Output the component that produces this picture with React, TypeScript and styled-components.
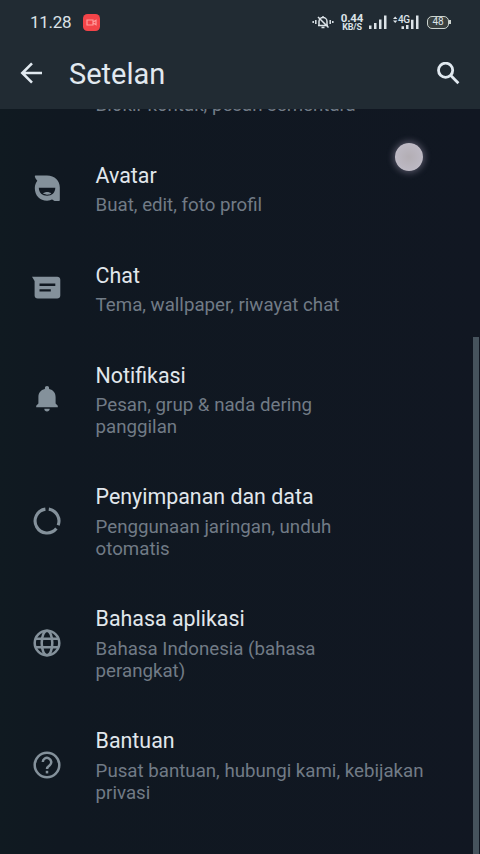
import React from 'react';
import styled, { createGlobalStyle } from 'styled-components';

const Global = createGlobalStyle`
  * { box-sizing: border-box; }
  body { margin: 0; background: #101821; font-family: Roboto, "Noto Sans", sans-serif; }
  svg { display: block; flex: none; }
`;
const Screen = styled.main`
  position: relative; width: 480px; height: 854px; overflow: hidden;
  display: flex; flex-direction: column; background: linear-gradient(90deg, #101a21 0, #101821 60px, #111722 100%);
`;
const Header = styled.header`flex: none; height: 109px; background: #212b33; color: #e1e9f0;`;
const StatusBar = styled.div`height: 44px; padding: 0 29px 0 30px; display: flex; align-items: center;`;
const Clock = styled.span`width: 53px; font-size: 17px; line-height: 20px; letter-spacing: -.3px; white-space: nowrap; color: #dbe2e7;`;
const StatusIcons = styled.div`margin-left: auto; display: flex; align-items: center; color: #dce3e8;`;
const Speed = styled.div`
  width: 22px; margin: 0 6px 0 7px; display: flex; flex-direction: column; align-items: center;
  font-size: 11.5px; line-height: 10px; font-weight: 700; letter-spacing: -.1px;
`;
const SpeedUnit = styled.span`font-size: 9px; line-height: 9px; letter-spacing: -.2px;`;
const Network = styled.div`position: relative; margin-left: 6px;`;
const NetworkLabel = styled.span`position: absolute; left: 5px; top: 0; font-size: 10px; line-height: 10px; font-weight: 500; letter-spacing: -.5px;`;
const Battery = styled.div`
  position: relative; width: 22px; height: 13px; margin: 0 2px 0 8px; border: 1.5px solid #cbd3cf; border-radius: 5px;
  display: flex; align-items: center; justify-content: center; font-size: 10px; line-height: 10px; background: #39403f;
  &::after { content: ''; position: absolute; right: -3px; top: 3px; width: 2px; height: 4px; background: #cbd3cf; }
`;
const AppBar = styled.div`height: 65px; padding: 0 19px 5px 19px; display: flex; align-items: center;`;
const Heading = styled.h1`margin: 0 auto 0 25px; font-size: 29px; line-height: 36px; font-weight: 400;`;
const Viewport = styled.section`flex: 1; min-height: 0; overflow: hidden; display: flex; flex-direction: column;`;
const List = styled.div`margin-top: -70px; flex: none;`;
const Row = styled.div<{ $top: number }>`display: flex; align-items: center; padding: ${p => p.$top}px 0 23px;`;
const IconSlot = styled.div`width: 95.6px; padding: 0 0 2px 32px; flex: none; color: #84919b;`;
const Texts = styled.div<{ $gap: number }>`display: flex; flex-direction: column; gap: ${p => p.$gap}px; padding-top: ${p => 6 - p.$gap}px;`;
const Title = styled.div`font-size: 21.4px; line-height: 26px; color: #e1e7ec; white-space: nowrap;`;
const Subtitle = styled.div`font-size: 18.7px; line-height: 22px; color: #717b86; white-space: pre;`;
const ScrollThumb = styled.div`position: absolute; right: 1px; top: 337px; bottom: 0; width: 6px; background: #46535d;`;
const TouchDot = styled.div`
  position: absolute; left: 394.5px; top: 143px; width: 28px; height: 28px; border-radius: 50%;
  background: radial-gradient(circle, #b3aeb4 0, #bbb7c1 60%, #c9c5d3 100%); box-shadow: 0 0 6px 2px rgba(145,137,160,.48);
`;

const AvatarIcon = () => (
  <svg width="30" height="30" viewBox="0 0 30 30">
    <path fill="currentColor" d="M3.5 2.5H15c7.8 0 12.8 5.2 12.8 12v12.7c0 .5-.3.7-.8.7h-4.2c-1.2 0-1.7-1.5-2.8-1.5-1.1 0-2.4 1.3-5 1.3C8 27.7 2.8 23 2.8 15c0-3 1.1-5.5 2.5-7.3C3.9 6.3 3 4.8 2.8 3.3c0-.5.2-.8.7-.8z" />
    <path fill="#101821" d="M6.8 14.8h16.5c0 5-3.5 8-8.2 8-4.8 0-8.3-3-8.3-8z" />
    <path fill="currentColor" d="M11 20.5c2.1-2 6.2-2 8.3 0-2.1 1.6-6.2 1.6-8.3 0z" />
  </svg>
);
const ChatIcon = () => (
  <svg width="30" height="30" viewBox="0 0 30 30">
    <path fill="currentColor" d="M0 3.8h25.2c1.8 0 3.1 1.3 3.1 3v15.6c0 1.8-1.3 3.1-3.1 3.1H5.7c-1.8 0-3.1-1.3-3.1-3.1V8z" />
    <path stroke="#101821" strokeWidth="2.4" d="M7.5 11.8h15.8M7.5 17.4h11.3" />
  </svg>
);
const BellIcon = () => (
  <svg width="30" height="30" viewBox="0 0 30 30">
    <path fill="currentColor" d="M15 2c1.3 0 2.1.9 2.1 2v1c4.4.9 6.5 4.2 6.5 8.2v6.4l2.2 2.2v1.5H4.2v-1.5l2.2-2.2v-6.4c0-4 2.1-7.3 6.5-8.2V4c0-1.1.8-2 2.1-2zM12.3 24.7h5.4c0 1.8-1.2 2.8-2.7 2.8s-2.7-1-2.7-2.8z" />
  </svg>
);
const DataIcon = () => (
  <svg width="30" height="30" viewBox="0 0 30 30" fill="none" stroke="currentColor" strokeWidth="3.1">
    <path d="M13.4 3.1A12 12 0 1 0 24.4 22.6M16.8 3.1A12 12 0 0 1 26.2 19.2" />
  </svg>
);
const GlobeIcon = () => (
  <svg width="30" height="30" viewBox="0 0 30 30" fill="none" stroke="currentColor" strokeWidth="2.5">
    <circle cx="15" cy="15" r="12.3" /><ellipse cx="15" cy="15" rx="5.3" ry="12.3" />
    <path d="M3.6 10.7h22.8M3.6 19.3h22.8" />
  </svg>
);
const HelpIcon = () => (
  <svg width="30" height="30" viewBox="0 0 30 30" fill="none" stroke="currentColor" strokeWidth="2.5">
    <circle cx="15" cy="15" r="12.3" />
    <path d="M10.8 12.1a4.2 4.2 0 1 1 6.9 3.2c-1.8 1.3-2.7 2-2.7 3.8" />
    <path d="M15 20.8v2.6" />
  </svg>
);

type Item = { title: string; text?: string; icon?: React.ReactNode; gap?: number };
const items: Item[] = [
  { title: 'Privasi', text: 'Blokir kontak, pesan sementara' },
  { title: 'Avatar', text: 'Buat, edit, foto profil', icon: <AvatarIcon /> },
  { title: 'Chat', text: 'Tema, wallpaper, riwayat chat', icon: <ChatIcon /> },
  { title: 'Notifikasi', text: 'Pesan, grup & nada dering\npanggilan', icon: <BellIcon /> },
  { title: 'Penyimpanan dan data', text: 'Penggunaan jaringan, unduh\notomatis', icon: <DataIcon />, gap: 6 },
  { title: 'Bahasa aplikasi', text: 'Bahasa Indonesia (bahasa\nperangkat)', icon: <GlobeIcon />, gap: 6 },
  { title: 'Bantuan', text: 'Pusat bantuan, hubungi kami, kebijakan\nprivasi', icon: <HelpIcon />, gap: 6 },
  { title: 'Undang teman' },
];

const MutedBell = () => (
  <svg width="22" height="16" viewBox="0 0 22 16" fill="none" stroke="currentColor" strokeWidth="1.5">
    <path d="M6 11.5h10M7 11V7.5a4 4 0 0 1 8 0V11M9.5 13.5h3M11 2v2M6 3l10.5 10.5M3.8 6v4M18.2 6v4M1.2 7v2M20.8 7v2" />
  </svg>
);
const Signal = () => (
  <svg width="18" height="14" viewBox="0 0 18 14" fill="currentColor">
    <path d="M0 10.5h2.5V14H0zM5 8h2.5v6H5zM10 4.5h2.5V14H10zM15 .5h2.5V14H15z" />
  </svg>
);
const DataSignal = () => (
  <svg width="26" height="14" viewBox="0 0 26 14" fill="currentColor">
    <path d="M0 3.9 2.2 1.4l2.2 2.5zM0 5.4l2.2 2.5 2.2-2.5zM8.5 11.2H11V14H8.5zM13 10h2.5v4H13zM18 4.8h2.5V14H18zM23 .5h2.5V14H23z" />
  </svg>
);

export default function App() {
  return (
    <>
      <Global />
      <Screen>
        <Header>
          <StatusBar>
            <Clock>11.28</Clock>
            <svg width="17" height="17" viewBox="0 0 17 17">
              <rect width="17" height="17" rx="4.5" fill="#f34449" />
              <path d="M4 6h6v5H4zM10 8l3-1.8v4.6L10 9z" fill="none" stroke="#ff9b9c" strokeWidth="1.2" />
            </svg>
            <StatusIcons>
              <MutedBell />
              <Speed>0.44<SpeedUnit>KB/S</SpeedUnit></Speed>
              <Signal />
              <Network>
                <DataSignal />
                <NetworkLabel>4G</NetworkLabel>
              </Network>
              <Battery>48</Battery>
            </StatusIcons>
          </StatusBar>
          <AppBar>
            <svg width="25" height="24" viewBox="0 0 25 24" fill="none" stroke="currentColor" strokeWidth="2.6">
              <path d="M23 11H3.5M13 1.3 3.3 11l9.7 9.7" />
            </svg>
            <Heading>Setelan</Heading>
            <svg width="25" height="25" viewBox="0 0 25 25" fill="none" stroke="currentColor" strokeWidth="2.8">
              <circle cx="9.6" cy="8.3" r="7.1" /><path d="m14.8 13.6 7.6 7.6" />
            </svg>
          </AppBar>
        </Header>
        <Viewport>
          <List>
            {items.map(i => (
              <Row key={i.title} $top={i.text ? 23 : 22}>
                <IconSlot>{i.icon}</IconSlot>
                <Texts $gap={i.gap ?? 5}>
                  <Title>{i.title}</Title>
                  {i.text && <Subtitle>{i.text}</Subtitle>}
                </Texts>
              </Row>
            ))}
          </List>
        </Viewport>
        <ScrollThumb />
        <TouchDot />
      </Screen>
    </>
  );
}
